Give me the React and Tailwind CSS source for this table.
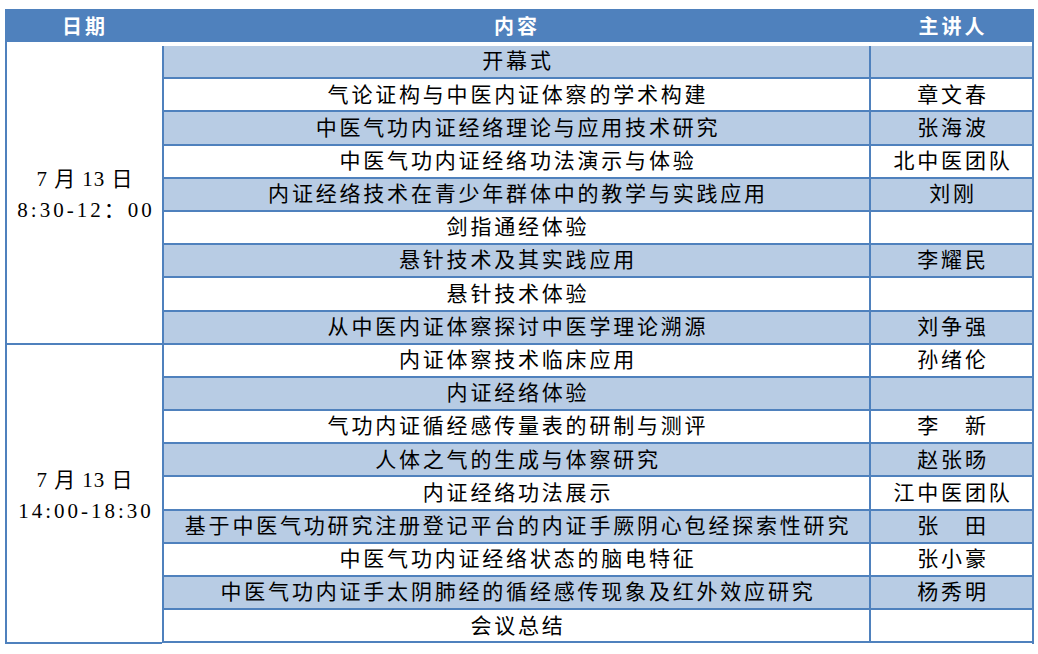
import React from "react";

const rows = [
  ["开幕式", ""],
  ["气论证构与中医内证体察的学术构建", "章文春"],
  ["中医气功内证经络理论与应用技术研究", "张海波"],
  ["中医气功内证经络功法演示与体验", "北中医团队"],
  ["内证经络技术在青少年群体中的教学与实践应用", "刘刚"],
  ["剑指通经体验", ""],
  ["悬针技术及其实践应用", "李耀民"],
  ["悬针技术体验", ""],
  ["从中医内证体察探讨中医学理论溯源", "刘争强"],
  ["内证体察技术临床应用", "孙绪伦"],
  ["内证经络体验", ""],
  ["气功内证循经感传量表的研制与测评", "李　新"],
  ["人体之气的生成与体察研究", "赵张旸"],
  ["内证经络功法展示", "江中医团队"],
  ["基于中医气功研究注册登记平台的内证手厥阴心包经探索性研究", "张　田"],
  ["中医气功内证经络状态的脑电特征", "张小豪"],
  ["中医气功内证手太阴肺经的循经感传现象及红外效应研究", "杨秀明"],
  ["会议总结", ""],
];

const serif = { fontFamily: '"Liberation Serif", "Noto Sans CJK SC", serif' };

const DateBlock = ({ day, time, className }) => (
  <div
    className={`flex flex-col items-center justify-center pt-[6px] border-b-2 border-[#4f81bd] text-[21px] leading-[31px] text-black ${className}`}
  >
    <div className="tracking-[1px] pl-[1px]">{day}</div>
    <div className="tracking-[3px] pl-[3px]">{time}</div>
  </div>
);

export default function App() {
  return (
    <div className="bg-white w-[1038px] h-[654px] pt-[9px] pl-[5px]" style={serif}>
      <div
        className="flex h-[33px] w-[1029px] items-center bg-[#4f81bd] text-[20px] font-bold text-white tracking-[3px]"
        style={{ fontFamily: '"Noto Sans CJK SC", sans-serif' }}
      >
        <div className="w-[157px] pl-[3px] text-center">日期</div>
        <div className="w-[707px] pl-[3px] text-center">内容</div>
        <div className="w-[165px] pl-[3px] text-center">主讲人</div>
      </div>

      <div className="flex w-[1029px] border-l-2 border-r-2 border-[#4f81bd]">
        <div className="w-[155px] flex flex-col">
          <DateBlock day="7 月 13 日" time="8:30-12：00" className="h-[302.8px]" />
          <DateBlock day="7 月 13 日" time="14:00-18:30" className="h-[298.8px]" />
        </div>

        <div className="flex-1 pt-[4px]">
          <div className="border-l-2 border-[#4f81bd]">
            {rows.map(([topic, speaker], i) => {
              const bg = i % 2 === 0 ? "bg-[#b8cce4]" : "bg-white";
              return (
                <div
                  key={i}
                  className={`flex h-[33.2px] border-b-2 border-[#4f81bd] text-[21px] text-black tracking-[2.8px] ${bg}`}
                >
                  <div className="w-[705px] flex items-center justify-center pl-[3px] pt-[1px] whitespace-nowrap">
                    {topic}
                  </div>
                  <div className="flex-1 flex items-center justify-center border-l-2 border-[#4f81bd] pl-[3px] pt-[1px] whitespace-nowrap">
                    {speaker}
                  </div>
                </div>
              );
            })}
          </div>
        </div>
      </div>
    </div>
  );
}
